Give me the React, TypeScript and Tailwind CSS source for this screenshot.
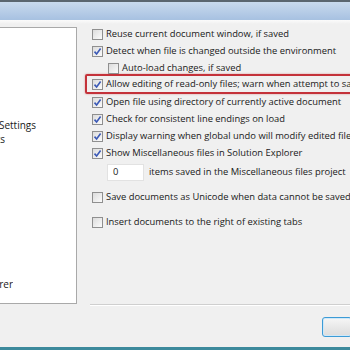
import { ReactNode } from 'react';

function Box({ checked }: { checked?: boolean }) {
  return (
    <span className="w-[11px] h-[11px] shrink-0 border border-[#8f8f8f] bg-gradient-to-br from-[#dcdcdc] to-[#fbfbfb] flex items-center justify-center">
      {checked && (
        <svg width="9" height="9" viewBox="0 0 9 9">
          <path d="M1.5 4.6 L3.6 7 L7.6 1.6" fill="none" stroke="#3b59b6" strokeWidth="1.6" />
        </svg>
      )}
    </span>
  );
}

function Row({ checked, children, indent }: { checked?: boolean; children: ReactNode; indent?: boolean }) {
  return (
    <div className={`h-[17px] flex items-center gap-[3px] whitespace-nowrap ${indent ? 'pl-[18px]' : 'pl-[2px]'}`}>
      <Box checked={checked} />
      <span>{children}</span>
    </div>
  );
}

export default function App() {
  return (
    <div
      className="w-[350px] h-[350px] overflow-hidden bg-[#f0f0f0] flex flex-col text-[9.4px] text-[#1a1a1a]"
      style={{ fontFamily: '"Open Sans", "Noto Sans", sans-serif' }}
    >
      {/* title strip */}
      <div className="h-[2px] bg-[#5b6670] shrink-0" />
      <div className="h-[18px] shrink-0 bg-gradient-to-b from-[#c9daee] to-[#a7c1e1]" />
      <div className="h-[4px] shrink-0 bg-gradient-to-b from-[#fbfbfb] to-[#f0f0f0]" />

      <div className="flex flex-1 min-h-0">
        {/* tree panel */}
        <div className="w-[77px] shrink-0 mt-[3px] h-[277px] bg-white border border-[#a9a9a9] border-l-0 flex flex-col text-[10px]">
          <div className="h-[90px]" />
          <div className="w-[36px] overflow-hidden flex justify-end whitespace-nowrap h-[14px] items-center">Import and Export Settings</div>
          <div className="w-[5px] overflow-hidden flex justify-end whitespace-nowrap h-[14px] items-center">Projects</div>
          <div className="h-[131px]" />
          <div className="w-[13px] overflow-hidden flex justify-end whitespace-nowrap h-[14px] items-center">Solution Explorer</div>
        </div>

        {/* options */}
        <div className="flex-1 min-w-0 pl-[13px] flex flex-col">
          <div className="pt-[2px]">
            <Row>Reuse current document window, if saved</Row>
            <Row checked>Detect when file is changed outside the environment</Row>
            <Row indent>Auto-load changes, if saved</Row>
            <div className="-mt-[3px] h-[20px] -ml-[5px] pl-[5px] w-[300px] border-2 border-[#c4323a] rounded-[2px] shadow-[0_0_2px_rgba(190,40,40,0.5)] flex items-center gap-[3px] whitespace-nowrap">
              <Box checked />
              <span>Allow editing of read-only files; warn when attempt to save</span>
            </div>
            <Row checked>Open file using directory of currently active document</Row>
            <Row checked>Check for consistent line endings on load</Row>
            <Row checked>Display warning when global undo will modify edited files</Row>
            <Row checked>Show Miscellaneous files in Solution Explorer</Row>
            <div className="flex items-center mt-[2px] pl-[17px] gap-[5px] whitespace-nowrap">
              <div className="w-[37px] h-[17px] bg-white border border-[#e2e2e2] pl-[5px] flex items-center">0</div>
              <span>items saved in the Miscellaneous files project</span>
            </div>
            <div className="h-[8px]" />
            <Row>Save documents as Unicode when data cannot be saved in codepage</Row>
            <div className="h-[8px]" />
            <Row>Insert documents to the right of existing tabs</Row>
          </div>

          <div className="mt-[73px] h-[2px] border-t border-[#cfcfcf] bg-white" />
          <div className="flex justify-end mt-[11px]">
            <div className="w-[30px] h-[20px] mr-[-2px] border border-[#3c9bd6] rounded-[3px] bg-gradient-to-b from-[#f6f6f6] to-[#dcdcdc] shadow-[inset_0_0_0_1px_#cfe8f8]" />
          </div>
        </div>
      </div>

      <div className="h-[3px] shrink-0 bg-[#3d8a9c]" />
    </div>
  );
}
